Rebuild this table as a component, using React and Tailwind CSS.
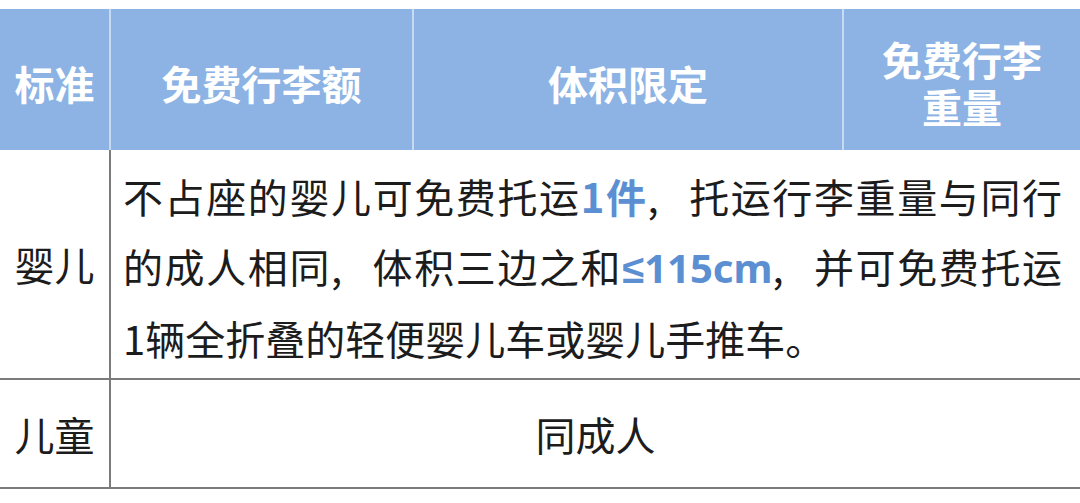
const hl = 'font-bold text-[#5b8fd2]';
const comma = 'inline-block w-[1em] text-center';

export default function App() {
  return (
    <div className="w-[1080px] h-[503px] bg-white pt-[9px] font-['Noto_Sans_CJK_SC',sans-serif] text-[#1c1c1c]">
      {/* header */}
      <div className="flex h-[141px] bg-[#8cb3e4] text-white font-bold text-[40px] leading-none">
        <div className="w-[111px] flex items-center justify-center pt-[6px] border-r-2 border-[#c8daf1]">标准</div>
        <div className="w-[303px] flex items-center justify-center pt-[6px] border-r-2 border-[#c8daf1]">免费行李额</div>
        <div className="w-[430px] flex items-center justify-center pt-[6px] border-r-2 border-[#c8daf1]">体积限定</div>
        <div className="flex-1 flex items-center justify-center pt-[6px]">
          <div className="text-center leading-[47px]">
            免费行李
            <br />
            重量
          </div>
        </div>
      </div>

      {/* infant row */}
      <div className="flex border-b-2 border-[#7b7b7b]">
        <div className="w-[111px] flex items-center justify-center border-r-2 border-[#7b7b7b] text-[40px] leading-none">婴儿</div>
        <div className="flex-1 pl-[12px] pr-[18px] pt-[11px] pb-[5px] text-[40px] leading-[70px] whitespace-nowrap">
          <div className="text-justify [text-align-last:justify]">
            不占座的婴儿可免费托运<span className={hl}>1件</span><span className={comma}>,</span>托运行李重量与同行
          </div>
          <div className="text-justify [text-align-last:justify]">
            的成人相同<span className={comma}>,</span>体积三边之和<span className={`${hl} font-['Noto_Sans',sans-serif]`}>≤115cm</span><span className={comma}>,</span>并可免费托运
          </div>
          <div>1辆全折叠的轻便婴儿车或婴儿手推车。</div>
        </div>
      </div>

      {/* child row */}
      <div className="flex h-[109px] border-b-2 border-[#7b7b7b] text-[40px] leading-none">
        <div className="w-[111px] flex items-center justify-center border-r-2 border-[#7b7b7b]">儿童</div>
        <div className="flex-1 flex items-center justify-center">同成人</div>
      </div>
    </div>
  );
}
